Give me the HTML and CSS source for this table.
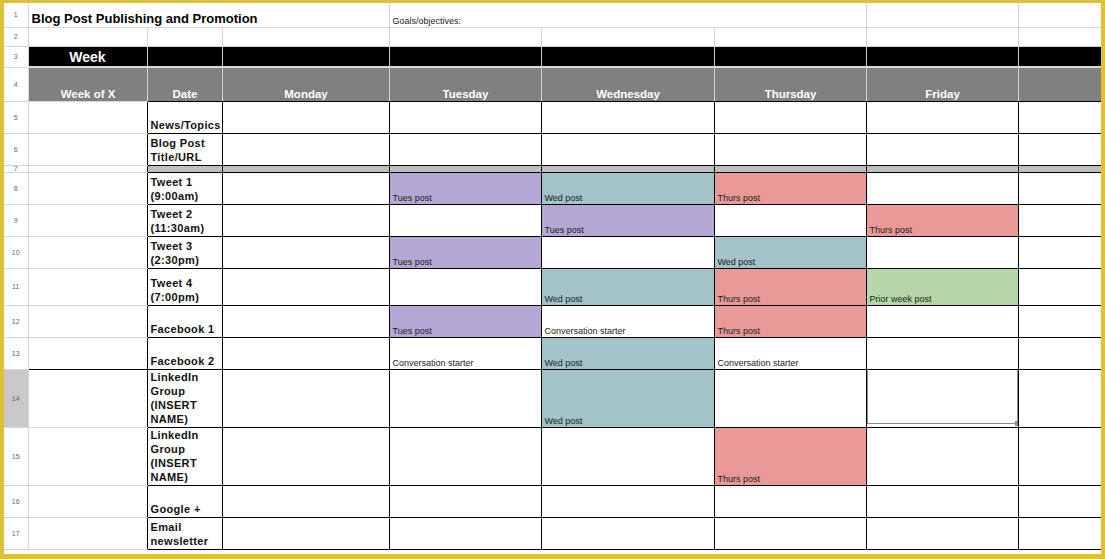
FILE: index.html
```html
<!DOCTYPE html>
<html lang="en">
<head>
  <meta charset="UTF-8">
  <title>Blog Post Publishing and Promotion</title>
  <link rel="stylesheet" href="styles.css">
</head>
<body>
  <div class="frame">
    <table class="sheet">
      <colgroup>
        <col class="c-num">
        <col class="c-week">
        <col class="c-date">
        <col class="c-mon">
        <col class="c-day">
        <col class="c-wed">
        <col class="c-day">
        <col class="c-day">
        <col class="c-end">
      </colgroup>

      <tr class="r-title">
        <td class="rn">1</td>
        <td colspan="3" class="title">Blog Post Publishing and Promotion</td>
        <td colspan="3" class="goals">Goals/objectives:</td>
        <td></td>
        <td></td>
      </tr>
      <tr class="r-blank">
        <td class="rn">2</td>
        <td></td><td></td><td></td><td></td><td></td><td></td><td></td><td></td>
      </tr>
      <tr class="r-week">
        <td class="rn">3</td>
        <td class="week">Week</td>
        <td></td><td></td><td></td><td></td><td></td><td></td><td></td>
      </tr>
      <tr class="r-head">
        <td class="rn">4</td>
        <td class="first">Week of X</td>
        <td>Date</td>
        <td>Monday</td>
        <td>Tuesday</td>
        <td>Wednesday</td>
        <td>Thursday</td>
        <td>Friday</td>
        <td></td>
      </tr>

      <tr class="grid">
        <td class="rn">5</td>
        <td class="first"></td>
        <td class="label">News/Topics</td>
        <td></td><td></td><td></td><td></td><td></td><td></td>
      </tr>
      <tr class="grid">
        <td class="rn">6</td>
        <td class="first"></td>
        <td class="label">Blog Post Title/URL</td>
        <td></td><td></td><td></td><td></td><td></td><td></td>
      </tr>
      <tr class="grid r-sep">
        <td class="rn">7</td>
        <td class="first"></td>
        <td></td><td></td><td></td><td></td><td></td><td></td><td></td>
      </tr>
      <tr class="grid">
        <td class="rn">8</td>
        <td class="first"></td>
        <td class="label">Tweet 1 (9:00am)</td>
        <td></td>
        <td class="tues">Tues post</td>
        <td class="wed">Wed post</td>
        <td class="thurs">Thurs post</td>
        <td></td>
        <td></td>
      </tr>
      <tr class="grid">
        <td class="rn">9</td>
        <td class="first"></td>
        <td class="label">Tweet 2 (11:30am)</td>
        <td></td>
        <td></td>
        <td class="tues">Tues post</td>
        <td></td>
        <td class="thurs">Thurs post</td>
        <td></td>
      </tr>
      <tr class="grid">
        <td class="rn">10</td>
        <td class="first"></td>
        <td class="label">Tweet 3 (2:30pm)</td>
        <td></td>
        <td class="tues">Tues post</td>
        <td></td>
        <td class="wed">Wed post</td>
        <td></td>
        <td></td>
      </tr>
      <tr class="grid r-mid">
        <td class="rn">11</td>
        <td class="first"></td>
        <td class="label">Tweet 4 (7:00pm)</td>
        <td></td>
        <td></td>
        <td class="wed">Wed post</td>
        <td class="thurs">Thurs post</td>
        <td class="prior">Prior week post</td>
        <td></td>
      </tr>
      <tr class="grid">
        <td class="rn">12</td>
        <td class="first"></td>
        <td class="label">Facebook 1</td>
        <td></td>
        <td class="tues">Tues post</td>
        <td class="note">Conversation starter</td>
        <td class="thurs">Thurs post</td>
        <td></td>
        <td></td>
      </tr>
      <tr class="grid">
        <td class="rn">13</td>
        <td class="first dark"></td>
        <td class="label">Facebook 2</td>
        <td></td>
        <td class="note">Conversation starter</td>
        <td class="wed">Wed post</td>
        <td class="note">Conversation starter</td>
        <td></td>
        <td></td>
      </tr>
      <tr class="grid r-tall">
        <td class="rn picked">14</td>
        <td class="first"></td>
        <td class="label">LinkedIn Group (INSERT NAME)</td>
        <td></td>
        <td></td>
        <td class="wed">Wed post</td>
        <td></td>
        <td class="selected"><span class="sel-box"><span class="sel-handle"></span></span></td>
        <td></td>
      </tr>
      <tr class="grid r-tall2">
        <td class="rn">15</td>
        <td class="first"></td>
        <td class="label">LinkedIn Group (INSERT NAME)</td>
        <td></td>
        <td></td>
        <td></td>
        <td class="thurs">Thurs post</td>
        <td></td>
        <td></td>
      </tr>
      <tr class="grid">
        <td class="rn">16</td>
        <td class="first"></td>
        <td class="label">Google +</td>
        <td></td><td></td><td></td><td></td><td></td><td></td>
      </tr>
      <tr class="grid">
        <td class="rn">17</td>
        <td class="first"></td>
        <td class="label">Email newsletter</td>
        <td></td><td></td><td></td><td></td><td></td><td></td>
      </tr>
    </table>
  </div>
</body>
</html>
```

FILE: styles.css
```css
body {
  margin: 0;
  background-color: #ffffff;
  font-family: "Liberation Sans", Arial, sans-serif;
}
.frame {
  width: 1105px;
  height: 559px;
  box-sizing: border-box;
  border: 4px solid #dfc03a;
  border-top-width: 3px;
  border-bottom-width: 5px;
  background-color: #ffffff;
  overflow: hidden;
}
.sheet {
  width: 1097px;
  table-layout: fixed;
  border-collapse: collapse;
}
.c-num { width: 24px; }
.c-week { width: 119px; }
.c-date { width: 75px; }
.c-mon { width: 167px; }
.c-day { width: 152px; }
.c-wed { width: 173px; }
.c-end { width: 83px; }

.sheet td {
  border-right: 1px solid #d6d6d6;
  border-bottom: 1px solid #d6d6d6;
  padding: 0 2px 0 3px;
  vertical-align: bottom;
  font-size: 9px;
  line-height: 11px;
  color: #1a1a1a;
  white-space: nowrap;
  overflow: hidden;
}
.sheet td:last-child {
  border-right: none;
}
.sheet tr {
  height: 32px;
}
.sheet .rn {
  font-size: 7px;
  color: #666;
  text-align: center;
  vertical-align: middle;
  padding: 0;
}
.sheet .rn.picked {
  background-color: #c9c9c9;
}

/* title rows */
.sheet .r-title { height: 24px; }
.sheet .r-blank { height: 19px; }
.sheet .title {
  font-size: 13px;
  font-weight: bold;
  line-height: 16px;
  color: #000;
  padding-bottom: 0;
}

/* header bands */
.sheet .r-week { height: 21px; }
.r-week td:not(.rn) {
  background-color: #000;
  border-right-color: #cfcfcf;
  border-bottom: 2px solid #d9d9d9;
}
.sheet .week {
  color: #fff;
  font-size: 14px;
  font-weight: bold;
  line-height: 16px;
  text-align: center;
  vertical-align: middle;
  padding: 2px 0 0;
}
.sheet .r-head { height: 34px; }
.r-head td:not(.rn) {
  background-color: #808080;
  color: #fff;
  font-size: 11.5px;
  font-weight: bold;
  line-height: 14px;
  text-align: center;
  border-right-color: #d4d4d4;
  border-bottom-color: #000;
}
.r-head td.first {
  border-bottom-color: #d6d6d6;
}

/* main grid */
.grid td:not(.rn) {
  border-color: #000;
}
.grid td.first {
  border-bottom-color: #d6d6d6;
}
.grid td.first.dark {
  border-bottom-color: #000;
}
.sheet .label {
  font-size: 11px;
  font-weight: bold;
  letter-spacing: 0.35px;
  line-height: 14px;
  white-space: normal;
  color: #111;
  padding: 0 0 1px 3px;
}
.sheet .r-sep { height: 7px; }
.r-sep td {
  line-height: 0;
  padding: 0;
}
.sheet .r-sep .rn {
  line-height: 6px;
}
.r-sep td:not(.rn):not(.first) {
  background-color: #bfbfbf;
}
.sheet .r-mid { height: 37px; }
.sheet .r-tall { height: 58px; }
.sheet .r-tall2 { height: 57px; }

.tues { background-color: #b4a7d6; }
.wed { background-color: #a2c4c9; }
.thurs { background-color: #ea9999; }
.prior { background-color: #b6d7a8; }

.selected {
  position: relative;
}
.sel-box {
  position: absolute;
  left: 0;
  right: 0;
  top: -2px;
  bottom: 3px;
  border: 1px solid #8c8c8c;
}
.sel-handle {
  position: absolute;
  right: -3px;
  bottom: -3px;
  width: 5px;
  height: 5px;
  background-color: #8c8c8c;
}
```
